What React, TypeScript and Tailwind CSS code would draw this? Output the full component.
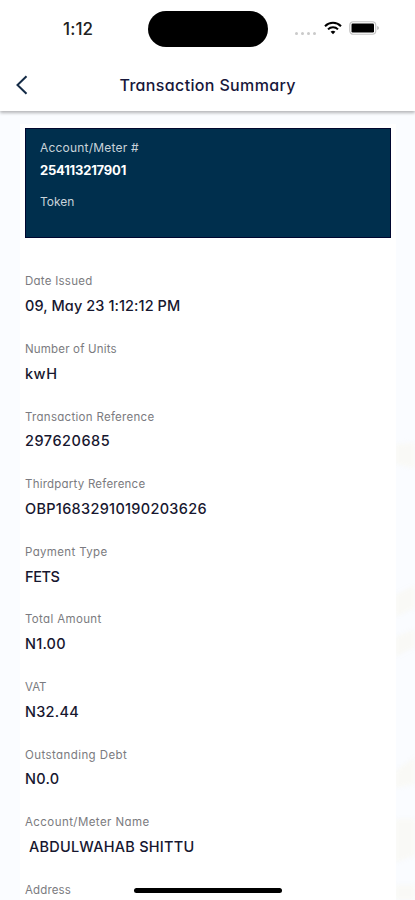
type Field = {
  label: string;
  value: string;
  labelClass?: string;
  valueClass?: string;
};

const fields: Field[] = [
  {
    label: 'Date Issued',
    value: '09, May 23 1:12:12 PM',
    labelClass: 'tracking-[0.25px]',
    valueClass: 'tracking-[0.08px]',
  },
  {
    label: 'Number of Units',
    value: 'kwH',
    labelClass: 'tracking-[0.18px]',
    valueClass: 'tracking-[0.5px]',
  },
  {
    label: 'Transaction Reference',
    value: '297620685',
    labelClass: 'tracking-[0.29px]',
    valueClass: 'tracking-[0.52px]',
  },
  {
    label: 'Thirdparty Reference',
    value: 'OBP16832910190203626',
    labelClass: 'tracking-[0.22px]',
    valueClass: 'tracking-[0.3px]',
  },
  {
    label: 'Payment Type',
    value: 'FETS',
    labelClass: 'tracking-[0.35px]',
    valueClass: 'tracking-[-0.4px]',
  },
  {
    label: 'Total Amount',
    value: 'N1.00',
    labelClass: 'tracking-[0.35px]',
    valueClass: 'tracking-[0.2px]',
  },
  { label: 'VAT', value: 'N32.44', valueClass: 'tracking-[0.25px]' },
  {
    label: 'Outstanding Debt',
    value: 'N0.0',
    labelClass: 'tracking-[0.42px]',
    valueClass: 'tracking-[0.3px]',
  },
  {
    label: 'Account/Meter Name',
    value: 'ABDULWAHAB SHITTU',
    labelClass: 'tracking-[0.43px]',
    valueClass: 'pl-1 tracking-[0.25px]',
  },
  { label: 'Address', value: '', labelClass: 'tracking-[0.15px]' },
];

const WifiIcon = () => (
  <svg width="18" height="14" viewBox="0 0 18 14" fill="none" stroke="#000" strokeWidth="2">
    <path d="M1 5.2C5.5 0.6 12.5 0.6 17 5.2" />
    <path d="M4 8.4C6.8 5.5 11.2 5.5 14 8.4" />
    <path d="M9 13.2L6.6 10.7C8 9.5 10 9.5 11.4 10.7Z" fill="#000" stroke="none" />
  </svg>
);

const BatteryIcon = () => (
  <svg width="31" height="14" viewBox="0 0 31 14">
    <rect x="0.75" y="0.75" width="26" height="12.5" rx="3.5" fill="#fff" stroke="#c4c4c4" strokeWidth="1.2" />
    <rect x="2.5" y="2.5" width="22.5" height="9" rx="1.2" fill="#000" />
    <path d="M28.3 5V9C30.3 8.3 30.3 5.7 28.3 5Z" fill="#b0b0b0" />
  </svg>
);

const StatusBar = () => (
  <div className="flex h-[59px] items-start">
    <div className="mt-[18px] w-[148px] pl-[63px] text-[17px] leading-[22px] font-medium tracking-[0.1px] text-[#222]">
      1:12
    </div>
    <div className="mt-[11px] h-9 w-[120px] rounded-full bg-black" />
    <div className="mt-[21px] ml-[27px] flex items-start">
      <div className="mt-[11px] mr-[8px] flex gap-[3px]">
        {[0, 1, 2, 3].map(dot => (
          <span key={dot} className="h-[3px] w-[3px] rounded-full bg-[#cacaca]" />
        ))}
      </div>
      <WifiIcon />
      <div className="ml-[7px]">
        <BatteryIcon />
      </div>
    </div>
  </div>
);

const Header = () => (
  <div className="relative z-10 h-[111px] shrink-0 bg-white shadow-[0_2px_3px_rgba(0,0,0,0.28)]">
    <StatusBar />
    <div className="flex h-[52px] items-center">
      <svg className="ml-4" width="12" height="20" viewBox="0 0 12 20" fill="none">
        <path d="M10.5 1.3L1.5 10L10.5 18.7" stroke="#142b46" strokeWidth="2" />
      </svg>
      <h1 className="ml-[91.5px] text-[16px] font-medium tracking-[0.35px] text-[#17173b]">
        Transaction Summary
      </h1>
    </div>
  </div>
);

const MeterCard = () => (
  <div className="mx-[5px] h-[110px] border border-[#00072f] bg-[#002f4d] pt-[9px] pl-[14px]">
    <div className="text-[12px] leading-5 tracking-[0.2px] text-[#c9d3da]">Account/Meter #</div>
    <div className="mt-[2px] text-[13px] leading-5 font-bold tracking-[-0.2px] text-white">254113217901</div>
    <div className="mt-[12px] text-[12px] leading-5 text-[#c9d3da]">Token</div>
  </div>
);

const FieldRow = ({ label, value, labelClass = '', valueClass = '' }: Field) => (
  <div className="h-[67.6px]">
    <div className="flex h-5 items-center">
      <span className={`text-[11.5px] whitespace-nowrap text-[#7b7b80] ${labelClass}`}>{label}</span>
    </div>
    <div className="mt-1 flex h-5 items-center">
      <span className={`text-[14.5px] font-medium whitespace-nowrap text-[#17172f] ${valueClass}`}>{value}</span>
    </div>
  </div>
);

export default function App() {
  return (
    <div className="relative flex h-[900px] w-[415px] flex-col overflow-hidden bg-[#fafcff] font-['Inter',sans-serif] [font-feature-settings:'cv11']">
      <Header />

      {/* faint pattern along the right edge */}
      <svg className="absolute top-[430px] right-0 blur-[2px]" width="20" height="470" viewBox="0 0 20 470" fill="#f9f9f6">
        <path d="M0 14L20 13V38L0 34Z" />
        <path d="M0 165L20 155V178L0 187Z" />
        <path d="M0 207L20 199V217L0 227Z" />
        <path d="M0 341L20 327V354L0 358Z" />
        <path d="M0 389H20V425L0 433Z" />
        <path d="M0 455H20V470H0Z" />
      </svg>

      <main className="relative mt-[13px] mr-[19px] ml-[20px] flex-1 bg-white pt-1">
        <MeterCard />
        <div className="mt-[34px] pl-[5px]">
          {fields.map(field => (
            <FieldRow key={field.label} {...field} />
          ))}
        </div>
      </main>

      <div className="absolute top-[888px] left-[134px] h-[5px] w-[148px] rounded-full bg-black" />
    </div>
  );
}
